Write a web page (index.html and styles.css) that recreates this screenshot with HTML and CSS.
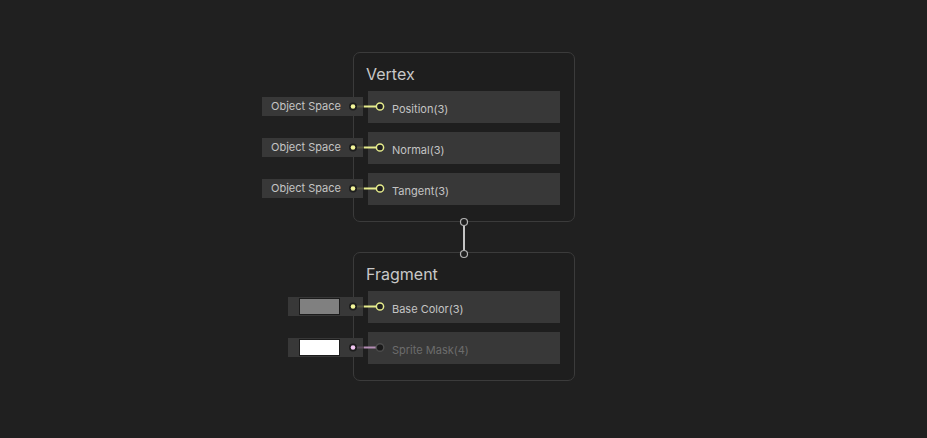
FILE: index.html
```html
<!DOCTYPE html>
<html>
<head>
<meta charset="utf-8">
<link rel="stylesheet" href="styles.css">
</head>
<body>
<div class="canvas">
  <div class="node node-vertex">
    <div class="node-title">Vertex</div>
    <div class="rows">
      <div class="row">
        <div class="input-box">Object Space</div>
        <svg class="wire" width="40" height="32" viewBox="0 0 40 32">
          <line x1="9" y1="15.5" x2="16" y2="15.5" stroke="#55553f" stroke-width="2"/>
          <line x1="16" y1="15.5" x2="28" y2="15.5" stroke="#e6ec8c" stroke-width="2"/>
          <circle cx="5" cy="15.5" r="4" fill="#1d1d1d"/>
          <circle cx="5" cy="15.5" r="2.3" fill="#f2f59a"/>
          <circle cx="32" cy="15.5" r="3.6" fill="#202020" stroke="#e6ec8c" stroke-width="1.5"/>
        </svg>
        <span class="label">Position(3)</span>
      </div>
      <div class="row">
        <div class="input-box">Object Space</div>
        <svg class="wire" width="40" height="32" viewBox="0 0 40 32">
          <line x1="9" y1="15.5" x2="16" y2="15.5" stroke="#55553f" stroke-width="2"/>
          <line x1="16" y1="15.5" x2="28" y2="15.5" stroke="#e6ec8c" stroke-width="2"/>
          <circle cx="5" cy="15.5" r="4" fill="#1d1d1d"/>
          <circle cx="5" cy="15.5" r="2.3" fill="#f2f59a"/>
          <circle cx="32" cy="15.5" r="3.6" fill="#202020" stroke="#e6ec8c" stroke-width="1.5"/>
        </svg>
        <span class="label">Normal(3)</span>
      </div>
      <div class="row">
        <div class="input-box">Object Space</div>
        <svg class="wire" width="40" height="32" viewBox="0 0 40 32">
          <line x1="9" y1="15.5" x2="16" y2="15.5" stroke="#55553f" stroke-width="2"/>
          <line x1="16" y1="15.5" x2="28" y2="15.5" stroke="#e6ec8c" stroke-width="2"/>
          <circle cx="5" cy="15.5" r="4" fill="#1d1d1d"/>
          <circle cx="5" cy="15.5" r="2.3" fill="#f2f59a"/>
          <circle cx="32" cy="15.5" r="3.6" fill="#202020" stroke="#e6ec8c" stroke-width="1.5"/>
        </svg>
        <span class="label">Tangent(3)</span>
      </div>
    </div>
  </div>

  <div class="node node-fragment">
    <div class="node-title">Fragment</div>
    <div class="rows">
      <div class="row">
        <div class="color-box"><span class="swatch swatch-gray"></span></div>
        <svg class="wire" width="40" height="32" viewBox="0 0 40 32">
          <line x1="9" y1="15.5" x2="16" y2="15.5" stroke="#55553f" stroke-width="2"/>
          <line x1="16" y1="15.5" x2="28" y2="15.5" stroke="#e6ec8c" stroke-width="2"/>
          <circle cx="5" cy="15.5" r="4" fill="#1d1d1d"/>
          <circle cx="5" cy="15.5" r="2.3" fill="#f2f59a"/>
          <circle cx="32" cy="15.5" r="3.6" fill="#202020" stroke="#e6ec8c" stroke-width="1.5"/>
        </svg>
        <span class="label">Base Color(3)</span>
      </div>
      <div class="row">
        <div class="color-box"><span class="swatch swatch-white"></span></div>
        <svg class="wire" width="40" height="32" viewBox="0 0 40 32">
          <line x1="9" y1="15.5" x2="16" y2="15.5" stroke="#5a4a5a" stroke-width="2"/>
          <line x1="16" y1="15.5" x2="28" y2="15.5" stroke="#b48db4" stroke-width="2"/>
          <circle cx="5" cy="15.5" r="4" fill="#1d1d1d"/>
          <circle cx="5" cy="15.5" r="2.3" fill="#f2c6f2"/>
          <circle cx="32" cy="15.5" r="3.8" fill="#1a1a1a" stroke="#4c4c4c" stroke-width="1.4"/>
        </svg>
        <span class="label label-dim">Sprite Mask(4)</span>
      </div>
    </div>
  </div>

  <svg class="flow-link" width="12" height="44" viewBox="0 0 12 44">
    <line x1="6" y1="10" x2="6" y2="34" stroke="#c4c4c4" stroke-width="2"/>
    <circle cx="6" cy="6" r="3.5" fill="#202020" stroke="#b4b4b4" stroke-width="1.2"/>
    <circle cx="6" cy="38" r="3.5" fill="#202020" stroke="#b4b4b4" stroke-width="1.2"/>
  </svg>
</div>
</body>
</html>
```

FILE: styles.css
```css
html, body {
  margin: 0;
  padding: 0;
  background: #202020;
}

.canvas {
  position: relative;
  width: 927px;
  height: 438px;
  background: #202020;
  overflow: hidden;
  font-family: Inter, "Noto Sans", sans-serif;
}

.node {
  position: absolute;
  left: 353px;
  width: 222px;
  box-sizing: border-box;
  border: 1px solid #3b3b3b;
  border-radius: 7px;
  background: #1e1e1e;
  padding: 0 14px 16px 14px;
  display: flex;
  flex-direction: column;
}

.node-vertex {
  top: 52px;
  height: 170px;
}

.node-fragment {
  top: 252px;
  height: 129px;
}

.node-title {
  height: 38px;
  box-sizing: border-box;
  padding-top: 11px;
  margin-left: -2px;
  font-size: 16px;
  line-height: 20px;
  color: #c8c8c8;
}

.rows {
  display: flex;
  flex-direction: column;
  gap: 9px;
}

.row {
  position: relative;
  height: 32px;
  background: #383838;
  display: flex;
  align-items: center;
  padding-left: 24px;
}

.label {
  font-size: 11px;
  color: #c4c4c4;
  padding-top: 3px;
}

.label-dim {
  color: #6c6c6c;
}

.input-box {
  position: absolute;
  left: -106px;
  top: 6px;
  width: 101px;
  height: 19px;
  box-sizing: border-box;
  background: #383838;
  padding-left: 9px;
  font-size: 11px;
  line-height: 19px;
  color: #c4c4c4;
}

.color-box {
  position: absolute;
  left: -80px;
  top: 6px;
  width: 75px;
  height: 19px;
  box-sizing: border-box;
  background: #383838;
  padding: 1px 0 0 11px;
}

.swatch {
  display: block;
  width: 41px;
  height: 17px;
  box-sizing: border-box;
  border: 1px solid #1c1c1c;
}

.swatch-gray {
  background: #808080;
}

.swatch-white {
  background: #ffffff;
}

.wire {
  position: absolute;
  left: -20px;
  top: 0;
}

.flow-link {
  position: absolute;
  left: 458px;
  top: 216px;
  z-index: 2;
}
```
